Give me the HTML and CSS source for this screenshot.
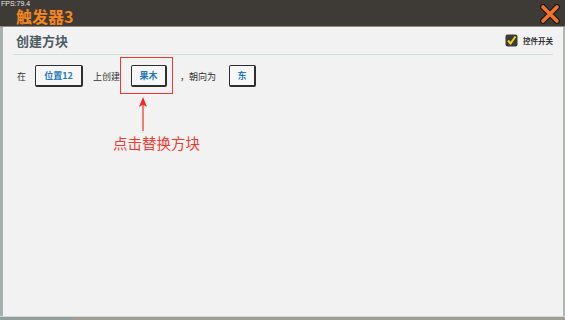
FILE: index.html
```html
<!DOCTYPE html>
<html lang="zh">
<head>
    <meta charset="UTF-8">
    <title>触发器3</title>
    <link rel="stylesheet" href="styles.css">
</head>
<body>
    <div class="window">
        <div class="titlebar">
            <span class="fps">FPS:79.4</span>
            <h1 class="title">触发器3</h1>
            <svg class="close" width="20" height="20" viewBox="0 0 20 20">
                <path d="M3 3 L17 17 M17 3 L3 17" stroke="#1a1a1a" stroke-width="6" stroke-linecap="round"/>
                <path d="M3 3 L17 17 M17 3 L3 17" stroke="#f2742a" stroke-width="3.6" stroke-linecap="round"/>
            </svg>
        </div>
        <div class="panel">
            <div class="section-head">
                <h2>创建方块</h2>
                <label class="toggle">
                    <svg width="13" height="13" viewBox="0 0 13 13">
                        <rect x="0.5" y="0.5" width="12" height="12" rx="2" fill="#3a3a3a"/>
                        <path d="M3 6.5 L5.5 9.5 L10.5 2.5" stroke="#f5d400" stroke-width="2" fill="none"/>
                    </svg>
                    <span>控件开关</span>
                </label>
            </div>
            <div class="row">
                <span class="word">在</span>
                <button class="pick wide">位置12</button>
                <span class="word">上创建</span>
                <span class="target">
                    <button class="pick">果木</button>
                    <span class="highlight"></span>
                </span>
                <span class="word">，朝向为</span>
                <button class="pick small">东</button>
            </div>
            <div class="hint">
                <svg class="arrow" width="10" height="34" viewBox="0 0 10 34">
                    <path d="M5 0 L9 10 L5.6 8 L5.6 34 L4.4 34 L4.4 8 L1 10 Z" fill="#f42a1e"/>
                </svg>
                <span>点击替换方块</span>
            </div>
        </div>
        <div class="bottom"><span class="strip"></span></div>
    </div>
</body>
</html>
```

FILE: styles.css
```css
* {
    margin: 0;
    padding: 0;
    box-sizing: border-box;
}

body {
    width: 565px;
    height: 320px;
    font-family: 'Noto Sans CJK SC', 'Liberation Sans', sans-serif;
    background: #8a8a80;
    overflow: hidden;
}

.window {
    width: 565px;
    height: 320px;
    display: flex;
    flex-direction: column;
}

.titlebar {
    position: relative;
    height: 27px;
    background: #3e3a35;
    display: flex;
    align-items: center;
    padding: 5px 0 0 16px;
    border-bottom: 1px solid #8f8a80;
}

.fps {
    position: absolute;
    left: 1px;
    top: 0;
    font-family: 'Liberation Sans', sans-serif;
    font-size: 7px;
    line-height: 7px;
    color: #e8e8e8;
}

.title {
    font-size: 16px;
    font-weight: bold;
    color: #f4861f;
    line-height: 16px;
}

.close {
    position: absolute;
    right: 5px;
    top: 4px;
}

.panel {
    flex: 1;
    background: #f2f2f2;
    border-left: 3px solid #a6b0ae;
    border-right: 2px solid #b4b8b4;
    padding: 0 10px;
}

.section-head {
    display: flex;
    align-items: center;
    justify-content: space-between;
    height: 28px;
    padding: 0 0 0 3px;
    border-bottom: 1px solid #cfe0d8;
}

.section-head h2 {
    font-size: 13px;
    font-weight: bold;
    color: #4d5c62;
}

.toggle {
    display: flex;
    align-items: center;
    gap: 5px;
}

.toggle span {
    font-size: 7.5px;
    color: #333;
    font-weight: bold;
}

.row {
    display: flex;
    align-items: center;
    height: 42px;
    padding-left: 4px;
}

.word {
    font-size: 9px;
    color: #333;
}

.pick {
    height: 22px;
    width: 48px;
    background: #f7f7f7;
    border: 1px solid #2e2e2e;
    border-right-width: 2px;
    border-bottom-width: 2px;
    border-radius: 2px;
    font-family: inherit;
    font-size: 9px;
    font-weight: bold;
    color: #2479be;
}

.pick.wide {
    margin: 0 10px 0 9px;
}

.pick.small {
    width: 27px;
    margin-left: 13px;
}

.target {
    position: relative;
    display: flex;
    margin: 0 13px 0 11px;
}

.target .pick {
    width: 36px;
}

.highlight {
    position: absolute;
    left: -11px;
    top: -8px;
    width: 53px;
    height: 37px;
    border: 1.5px solid #f2382e;
}

.hint {
    display: flex;
    flex-direction: column;
    align-items: flex-start;
    margin-left: 100px;
}

.arrow {
    margin-left: 25px;
}

.hint span {
    font-size: 14.5px;
    color: #f43a30;
    margin-top: 1px;
    white-space: nowrap;
}

.bottom {
    height: 4px;
    background: #9e9e94;
    border-top: 1px solid #d8d8d0;
}

.strip {
    display: block;
    width: 72px;
    height: 2px;
    background: #8aa0a6;
}
```
